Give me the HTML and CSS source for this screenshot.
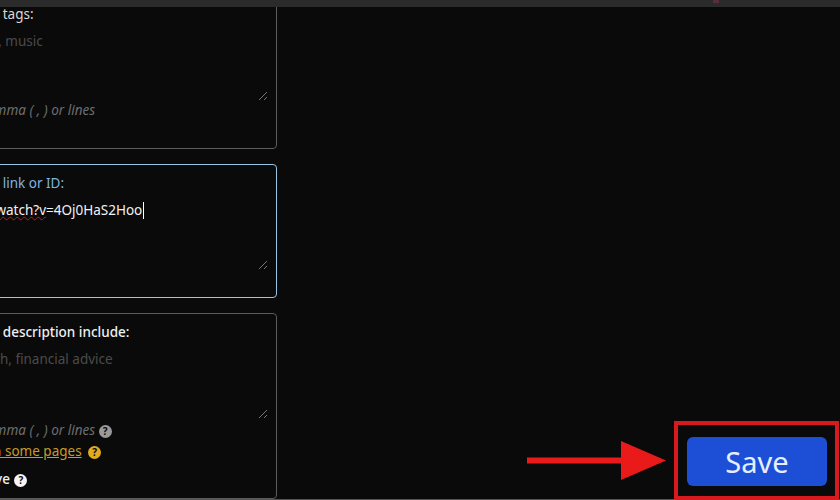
FILE: index.html
```html
<!DOCTYPE html>
<html lang="en">
<head>
    <meta charset="UTF-8">
    <meta name="viewport" content="width=device-width, initial-scale=1.0">
    <title>Settings</title>
    <link rel="stylesheet" href="styles.css">
</head>
<body>
    <div class="top-bar"><span class="top-mark"></span></div>

    <div class="page">
        <div class="filters">
            <section class="card card-first">
                <p class="label">Blocking video tags:</p>
                <div class="field">
                    <p class="placeholder">E.g: live, game, music</p>
                    <svg class="grip" viewBox="0 0 10 10"><path d="M1 9 9 1M6 9 9 6"/></svg>
                </div>
                <p class="hint">Separate by comma ( , ) or lines</p>
            </section>

            <section class="card card-active">
                <p class="label label-active">Blocking video link or ID:</p>
                <div class="field">
                    <p class="value"><span class="typo">youtube.com/watch?v</span>=4Oj0HaS2Hoo<span class="caret"></span></p>
                    <svg class="grip" viewBox="0 0 10 10"><path d="M1 9 9 1M6 9 9 6"/></svg>
                </div>
                <p class="hint">Split with lines</p>
            </section>

            <section class="card card-last">
                <p class="label label-strong">Hide clips that description include:</p>
                <div class="field">
                    <p class="placeholder">E.g: crypto, tech, financial advice</p>
                    <svg class="grip" viewBox="0 0 10 10"><path d="M1 9 9 1M6 9 9 6"/></svg>
                </div>
                <p class="hint">Separate by comma ( , ) or lines <span class="help help-grey">?</span></p>
                <p class="warning"><a href="#">Only shown on some pages</a> <span class="help help-yellow">?</span></p>
                <p class="option">Case insensitive <span class="help help-white">?</span></p>
            </section>
        </div>

        <div class="actions">
            <button class="save-button">Save</button>
        </div>
    </div>

    <!-- annotations drawn on top of the screenshot -->
    <svg class="arrow" viewBox="0 0 140 40"><path d="M0 16.5H94V0L139 19.5 94 39V22.5H0Z"/></svg>
    <div class="highlight"></div>
</body>
</html>
```

FILE: styles.css
```css
* {
    margin: 0;
    padding: 0;
    box-sizing: border-box;
    font-family: 'Noto Sans', sans-serif;
}

body {
    background-color: #0a0a0a;
    width: 840px;
    height: 500px;
    overflow: hidden;
    position: relative;
}

.top-bar {
    position: absolute;
    top: 0;
    left: 0;
    right: 0;
    height: 7px;
    background: #2b2b2b;
    z-index: 1;
}

.top-mark {
    position: absolute;
    left: 713px;
    top: 0;
    width: 6px;
    height: 3px;
    background: #55303a;
}

.page {
    display: flex;
    justify-content: space-between;
    height: 500px;
    border-bottom: 1px solid #555;
}

.filters {
    display: flex;
    flex-direction: column;
    gap: 15px;
    flex: none;
    width: 387px;
    margin: -5px 0 0 -110px;
}

.card {
    flex: none;
    height: 134px;
    padding: 9px 8px 0 16px;
    border: 1px solid #5c5c5c;
    border-radius: 4px;
    white-space: nowrap;
}

.card-first {
    height: 154px;
}

.card-active {
    border-color: #9cc4e4;
}

.card-last {
    flex: 1;
    height: auto;
}

.label {
    font-size: 13.5px;
    line-height: 18px;
    color: #d8d8d8;
}

.label-active {
    color: #7fb4e0;
}

.label-strong {
    color: #f0f0f0;
    font-weight: 500;
}

.field {
    position: relative;
    height: 75px;
    padding-top: 9px;
}

.placeholder {
    font-size: 13.5px;
    line-height: 18px;
    color: #4a4a4a;
}

.value {
    font-size: 13.5px;
    line-height: 18px;
    color: #f2f2f2;
}

.typo {
    text-decoration: underline wavy #a32222 1px;
}

.caret {
    display: inline-block;
    width: 1px;
    height: 17px;
    margin-left: 1px;
    background: #fff;
    vertical-align: -4px;
}

.grip {
    position: absolute;
    right: 0;
    bottom: -3px;
    width: 10px;
    height: 10px;
    fill: none;
    stroke: #777;
    stroke-width: 1;
}

.hint {
    margin-top: 3px;
    font-size: 13.5px;
    line-height: 18px;
    font-style: italic;
    color: #6e6e6e;
}

.card-last .hint {
    margin-top: 5px;
}

.warning {
    margin-top: 3px;
    font-size: 13.5px;
    line-height: 18px;
}

.warning a {
    color: #c79a2a;
}

.option {
    margin-top: 10px;
    font-size: 13.5px;
    line-height: 18px;
    color: #f0f0f0;
    font-weight: 500;
}

.help {
    display: inline-block;
    width: 13px;
    height: 13px;
    border-radius: 50%;
    background: #9a9a9a;
    color: #0a0a0a;
    font-size: 10px;
    font-style: normal;
    font-weight: 700;
    line-height: 13px;
    text-align: center;
    vertical-align: 0;
}

.help-yellow {
    margin-left: 3px;
    background: #e0ac1f;
}

.help-white {
    margin-left: 1px;
    background: #f4f4f4;
}

.actions {
    display: flex;
    align-items: flex-end;
    padding: 0 13px 13px 0;
}

.save-button {
    width: 140px;
    height: 49px;
    background: #1d4fd6;
    color: #e6efff;
    border: none;
    border-radius: 6px;
    font-size: 29px;
    cursor: pointer;
}

.arrow {
    position: absolute;
    left: 527px;
    top: 441px;
    width: 140px;
    height: 40px;
    fill: #ea1a1a;
}

.highlight {
    position: absolute;
    left: 674px;
    top: 421px;
    width: 165px;
    height: 79px;
    border: 4px solid #d81a1f;
}
```
